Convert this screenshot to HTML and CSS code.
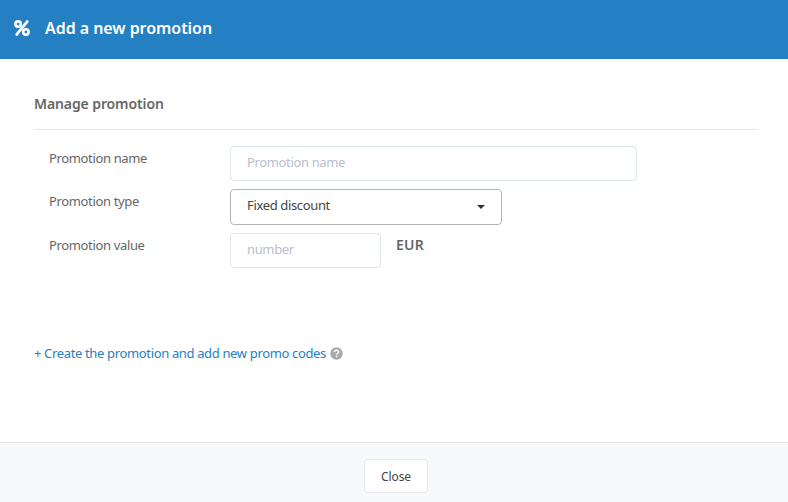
FILE: index.html
```html
<!DOCTYPE html>
<html lang="en">
<head>
<meta charset="utf-8">
<title>Add a new promotion</title>
<link rel="stylesheet" href="styles.css">
</head>
<body>
<div class="modal">
  <header class="head">
    <svg class="pct" width="16" height="16" viewBox="0 0 16 16" aria-hidden="true">
      <circle cx="4.1" cy="4.1" r="2.7" fill="none" stroke="#fff" stroke-width="2.6"/>
      <circle cx="11.9" cy="11.9" r="2.7" fill="none" stroke="#fff" stroke-width="2.6"/>
      <path d="M13.2 1.6 2.8 14.4" fill="none" stroke="#fff" stroke-width="2.8" stroke-linecap="round"/>
    </svg>
    <h1 class="title">Add a new promotion</h1>
  </header>
  <main class="body">
    <h2 class="section">Manage promotion</h2>
    <form class="form">
      <div class="row">
        <label class="lbl">Promotion name</label>
        <input class="inp inp-wide" placeholder="Promotion name">
      </div>
      <div class="row">
        <label class="lbl">Promotion type</label>
        <div class="select"><span>Fixed discount</span><i class="caret"></i></div>
      </div>
      <div class="row">
        <label class="lbl">Promotion value</label>
        <input class="inp inp-small" placeholder="number">
        <span class="unit">EUR</span>
      </div>
    </form>
    <p class="create"><a class="link" href="#">+ Create the promotion and add new promo codes</a>
      <svg class="help" width="13" height="13" viewBox="0 0 13 13" aria-hidden="true">
        <circle cx="6.5" cy="6.5" r="6.2" fill="#a9a9a9"/>
        <path d="M4.4 5.1c0-1.2 1-1.9 2.1-1.9 1.2 0 2.1.7 2.1 1.8 0 1.5-2 1.5-2 2.8" fill="none" stroke="#fff" stroke-width="1.4"/>
        <rect x="5.8" y="8.7" width="1.5" height="1.5" fill="#fff"/>
      </svg>
    </p>
  </main>
  <footer class="foot"><button class="btn" type="button">Close</button></footer>
</div>
</body>
</html>
```
FILE: styles.css
```css
* { box-sizing: border-box; }
html, body { margin: 0; height: 100%; }
body { font-family: "Noto Sans", "Open Sans", sans-serif; font-size: 13px; letter-spacing: -0.35px; color: #666; background: #fff; }
.modal { width: 788px; height: 502px; display: flex; flex-direction: column; overflow: hidden; }
.head { height: 59px; flex: none; background: #2580c3; display: flex; align-items: center; padding: 0 14px 4px; gap: 15px; }
.pct { flex: none; }
.title { margin: 0; font-size: 16px; font-weight: 600; letter-spacing: -0.05px; color: #fff; }
.body { flex: 1; padding: 34px 30px 0 34px; }
.section { margin: 0; font-size: 14px; font-weight: 600; letter-spacing: -0.1px; color: #666; line-height: 21px; padding-bottom: 15px; border-bottom: 1px solid #e5e5e5; }
.form { padding: 16px 0 0 15px; display: flex; flex-direction: column; gap: 8px; }
.row { display: flex; align-items: flex-start; }
.lbl { width: 181px; flex: none; line-height: 24px; }
.inp { height: 35px; border: 1px solid #dde6e9; border-radius: 4px; padding: 0 16px 3px; font: inherit; letter-spacing: -0.35px; color: #555; background: #fff; outline: none; }
.inp::placeholder { color: #b9bdcc; opacity: 1; }
.inp-wide { width: 407px; }
.inp-small { width: 151px; }
.select { width: 272px; height: 36px; border: 1px solid #b5b5b5; border-radius: 4px; padding: 0 16px 5px; display: flex; align-items: center; justify-content: space-between; color: #444; }
.caret { width: 0; height: 0; margin-top: 4px; border: 4px solid transparent; border-top-color: #333; border-bottom: 0; }
.unit { margin-left: 15px; font-size: 14px; font-weight: 600; letter-spacing: 0.2px; line-height: 24px; }
.create { margin: 75px 0 0; line-height: 20px; display: flex; align-items: center; gap: 4px; }
.link { color: #2580c3; text-decoration: none; }
.foot { height: 60px; flex: none; background: #f8f9fb; border-top: 1px solid #e5e5e5; display: flex; align-items: flex-start; justify-content: center; padding: 16px 0 0 4px; }
.btn { width: 64px; height: 34px; background: #fff; border: 1px solid #e8eaee; border-radius: 3px; font: inherit; font-size: 12px; letter-spacing: -0.1px; color: #444; }
```
